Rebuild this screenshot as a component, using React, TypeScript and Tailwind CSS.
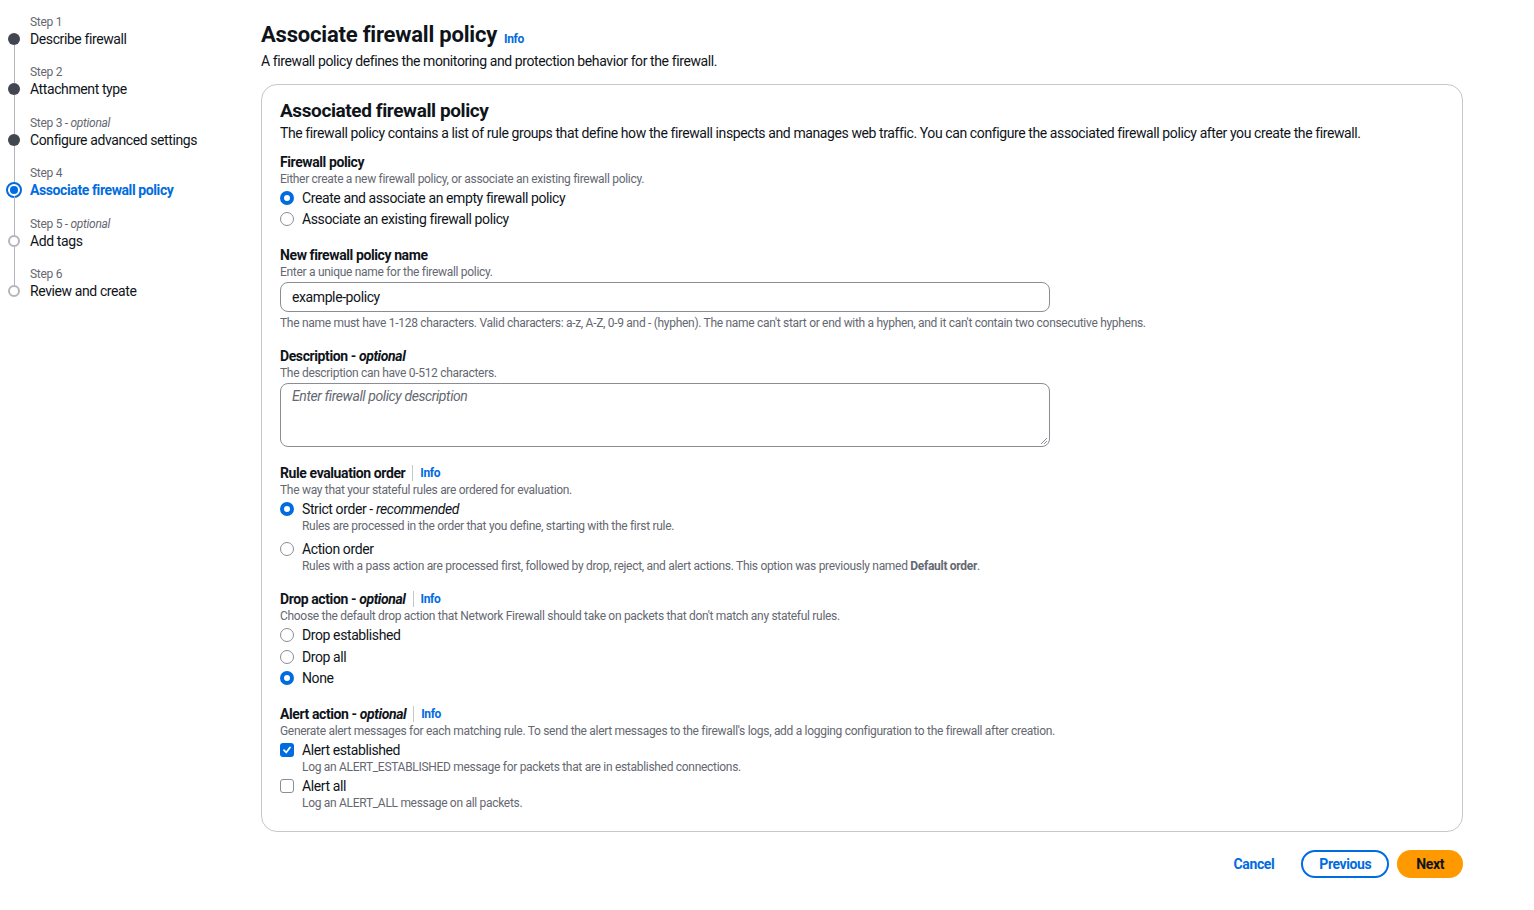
import React from "react";

const font = { fontFamily: 'Roboto, "Liberation Sans", Arial, sans-serif' };
const small = "text-[12px] leading-[16px] tracking-[-0.3px] text-[#656871]";

function LabelInfo({ children }: { children: React.ReactNode }) {
  return (
    <div className="flex h-[18px] items-center text-[14px] leading-[18px] font-bold text-[#0f141a]">
      <span>{children}</span>
      <span className="mx-[7px] h-[16px] w-px bg-[#c6c6cd]" />
      <span className="text-[12px] text-[#006ce0]">Info</span>
    </div>
  );
}

function Radio({ checked }: { checked?: boolean }) {
  return checked ? (
    <span className="inline-block h-[14px] w-[14px] shrink-0 rounded-full border-[4px] border-[#006ce0] bg-white" />
  ) : (
    <span className="inline-block h-[14px] w-[14px] shrink-0 rounded-full border-[1.5px] border-[#8c8c94] bg-white" />
  );
}

function Check({ checked }: { checked?: boolean }) {
  return checked ? (
    <span className="flex h-[14px] w-[14px] shrink-0 items-center justify-center rounded-[3px] bg-[#006ce0]">
      <svg width="10" height="10" viewBox="0 0 10 10" fill="none">
        <path d="M2 5.2 L4.2 7.5 L8 2.5" stroke="white" strokeWidth="1.8" strokeLinecap="round" strokeLinejoin="round" />
      </svg>
    </span>
  ) : (
    <span className="inline-block h-[14px] w-[14px] shrink-0 rounded-[3px] border-[1.5px] border-[#8c8c94] bg-white" />
  );
}

function Option({
  control,
  label,
  desc,
}: {
  control: React.ReactNode;
  label: React.ReactNode;
  desc?: React.ReactNode;
}) {
  return (
    <div className="flex gap-[8px]">
      <div className="flex h-[20px] items-center">{control}</div>
      <div>
        <div className="text-[14px] leading-[20px] text-[#0f141a]">{label}</div>
        {desc && <div className="text-[12px] leading-[14px] tracking-[-0.3px] text-[#656871]">{desc}</div>}
      </div>
    </div>
  );
}

const steps = [
  { label: "Step 1", title: "Describe firewall", state: "done" },
  { label: "Step 2", title: "Attachment type", state: "done" },
  { label: "Step 3", opt: true, title: "Configure advanced settings", state: "done" },
  { label: "Step 4", title: "Associate firewall policy", state: "current" },
  { label: "Step 5", opt: true, title: "Add tags", state: "todo" },
  { label: "Step 6", title: "Review and create", state: "todo" },
];

function Sidebar() {
  return (
    <nav className="w-[261px] shrink-0 pt-[15px] pl-[8px]">
      {steps.map((s, i) => (
        <div key={i} className="flex h-[50.4px]">
          <div className="flex w-[12px] flex-col items-center">
            <div className={"h-[18px] w-px " + (i === 0 ? "bg-transparent" : "bg-[#b4b4bb]")} />
            {s.state === "done" && <span className="h-[12px] w-[12px] shrink-0 rounded-full bg-[#424650]" />}
            {s.state === "current" && (
              <span className="-mx-[2px] -my-[2px] flex h-[16px] w-[16px] shrink-0 items-center justify-center rounded-full border-[2px] border-[#006ce0] bg-white">
                <span className="h-[8px] w-[8px] rounded-full bg-[#006ce0]" />
              </span>
            )}
            {s.state === "todo" && (
              <span className="h-[12px] w-[12px] shrink-0 rounded-full border-2 border-[#b4b4bb] bg-white" />
            )}
            <div className={"w-px flex-1 " + (i === steps.length - 1 ? "bg-transparent" : "bg-[#b4b4bb]")} />
          </div>
          <div className="pl-[10px]">
            <div className="text-[12px] leading-[14px] tracking-[-0.3px] text-[#656871]">
              {s.label}
              {s.opt && (
                <>
                  {" - "}
                  <i>optional</i>
                </>
              )}
            </div>
            <div
              className={
                "text-[14px] leading-[20px] " +
                (s.state === "current" ? "font-bold text-[#006ce0]" : "text-[#0f141a]")
              }
            >
              {s.title}
            </div>
          </div>
        </div>
      ))}
    </nav>
  );
}

export default function App() {
  return (
    <div style={font} className="flex min-h-[910px] w-full bg-white tracking-[-0.4px] text-[#0f141a]">
      <Sidebar />
      <main className="w-[1202px] pt-[20px]">
        <div className="flex h-[30px] items-end gap-[7px]">
          <h1 className="text-[22px] leading-[30px] font-bold tracking-[-0.2px]">Associate firewall policy</h1>
          <span className="pb-[1px] text-[12px] leading-[20px] font-bold text-[#006ce0]">Info</span>
        </div>
        <p className="mt-[1px] text-[14px] leading-[20px]">
          A firewall policy defines the monitoring and protection behavior for the firewall.
        </p>

        <section className="mt-[13px] rounded-[16px] border border-[#c6c6cd] bg-white px-[18px] pt-[14px] pb-[21px]">
          <h2 className="text-[19px] leading-[24px] font-bold">Associated firewall policy</h2>
          <p className="text-[14px] leading-[20px]">
            The firewall policy contains a list of rule groups that define how the firewall inspects and manages web traffic. You can configure the associated firewall policy after you create the firewall.
          </p>

          <div className="mt-[10px]">
            <div className="text-[14px] leading-[18px] font-bold">Firewall policy</div>
            <div className={small}>Either create a new firewall policy, or associate an existing firewall policy.</div>
            <div className="mt-[1px] flex flex-col gap-[1px]">
              <Option control={<Radio checked />} label="Create and associate an empty firewall policy" />
              <Option control={<Radio />} label="Associate an existing firewall policy" />
            </div>
          </div>

          <div className="mt-[17px]">
            <div className="text-[14px] leading-[18px] font-bold">New firewall policy name</div>
            <div className={small}>Enter a unique name for the firewall policy.</div>
            <div className="mt-[2px] flex h-[30px] w-[770px] items-center rounded-[8px] border border-[#8c8c94] px-[11px] text-[14px]">
              example-policy
            </div>
            <div className={"mt-[3px] " + small}>
              The name must have 1-128 characters. Valid characters: a-z, A-Z, 0-9 and - (hyphen). The name can't start or end with a hyphen, and it can't contain two consecutive hyphens.
            </div>
          </div>

          <div className="mt-[16px]">
            <div className="text-[14px] leading-[18px] font-bold">
              Description - <i>optional</i>
            </div>
            <div className={small}>The description can have 0-512 characters.</div>
            <div className="relative mt-[2px] h-[64px] w-[770px] rounded-[8px] border border-[#8c8c94] px-[11px] pt-[2px] text-[14px] leading-[20px] text-[#656871] italic">
              Enter firewall policy description
              <svg className="absolute right-[1px] bottom-[1px]" width="8" height="8" viewBox="0 0 8 8">
                <path d="M7 1 L1 7 M7 4 L4 7" stroke="#8c8c94" strokeWidth="1" />
              </svg>
            </div>
          </div>

          <div className="mt-[17px]">
            <LabelInfo>Rule evaluation order</LabelInfo>
            <div className={small}>The way that your stateful rules are ordered for evaluation.</div>
            <div className="mt-[1px] flex flex-col gap-[6px]">
              <Option
                control={<Radio checked />}
                label={
                  <>
                    Strict order - <i>recommended</i>
                  </>
                }
                desc="Rules are processed in the order that you define, starting with the first rule."
              />
              <Option
                control={<Radio />}
                label="Action order"
                desc={
                  <>
                    Rules with a pass action are processed first, followed by drop, reject, and alert actions. This option was previously named <b>Default order</b>.
                  </>
                }
              />
            </div>
          </div>

          <div className="mt-[17px]">
            <LabelInfo>
              Drop action - <i>optional</i>
            </LabelInfo>
            <div className={small}>
              Choose the default drop action that Network Firewall should take on packets that don't match any stateful rules.
            </div>
            <div className="mt-[1px] flex flex-col gap-[1.5px]">
              <Option control={<Radio />} label="Drop established" />
              <Option control={<Radio />} label="Drop all" />
              <Option control={<Radio checked />} label="None" />
            </div>
          </div>

          <div className="mt-[17px]">
            <LabelInfo>
              Alert action - <i>optional</i>
            </LabelInfo>
            <div className={small}>
              Generate alert messages for each matching rule. To send the alert messages to the firewall's logs, add a logging configuration to the firewall after creation.
            </div>
            <div className="mt-[1px] flex flex-col gap-[2px]">
              <Option
                control={<Check checked />}
                label="Alert established"
                desc="Log an ALERT_ESTABLISHED message for packets that are in established connections."
              />
              <Option control={<Check />} label="Alert all" desc="Log an ALERT_ALL message on all packets." />
            </div>
          </div>
        </section>

        <div className="mt-[18px] flex items-center justify-end gap-[8px]">
          <button className="px-[19px] text-[14px] leading-[24px] font-bold text-[#006ce0]">Cancel</button>
          <button className="h-[28px] rounded-full border-[2px] border-[#006ce0] px-[16px] text-[14px] font-bold text-[#006ce0]">
            Previous
          </button>
          <button className="h-[28px] rounded-full bg-[#ff9900] px-[19px] text-[14px] font-bold text-[#0f141a]">Next</button>
        </div>
      </main>
    </div>
  );
}
